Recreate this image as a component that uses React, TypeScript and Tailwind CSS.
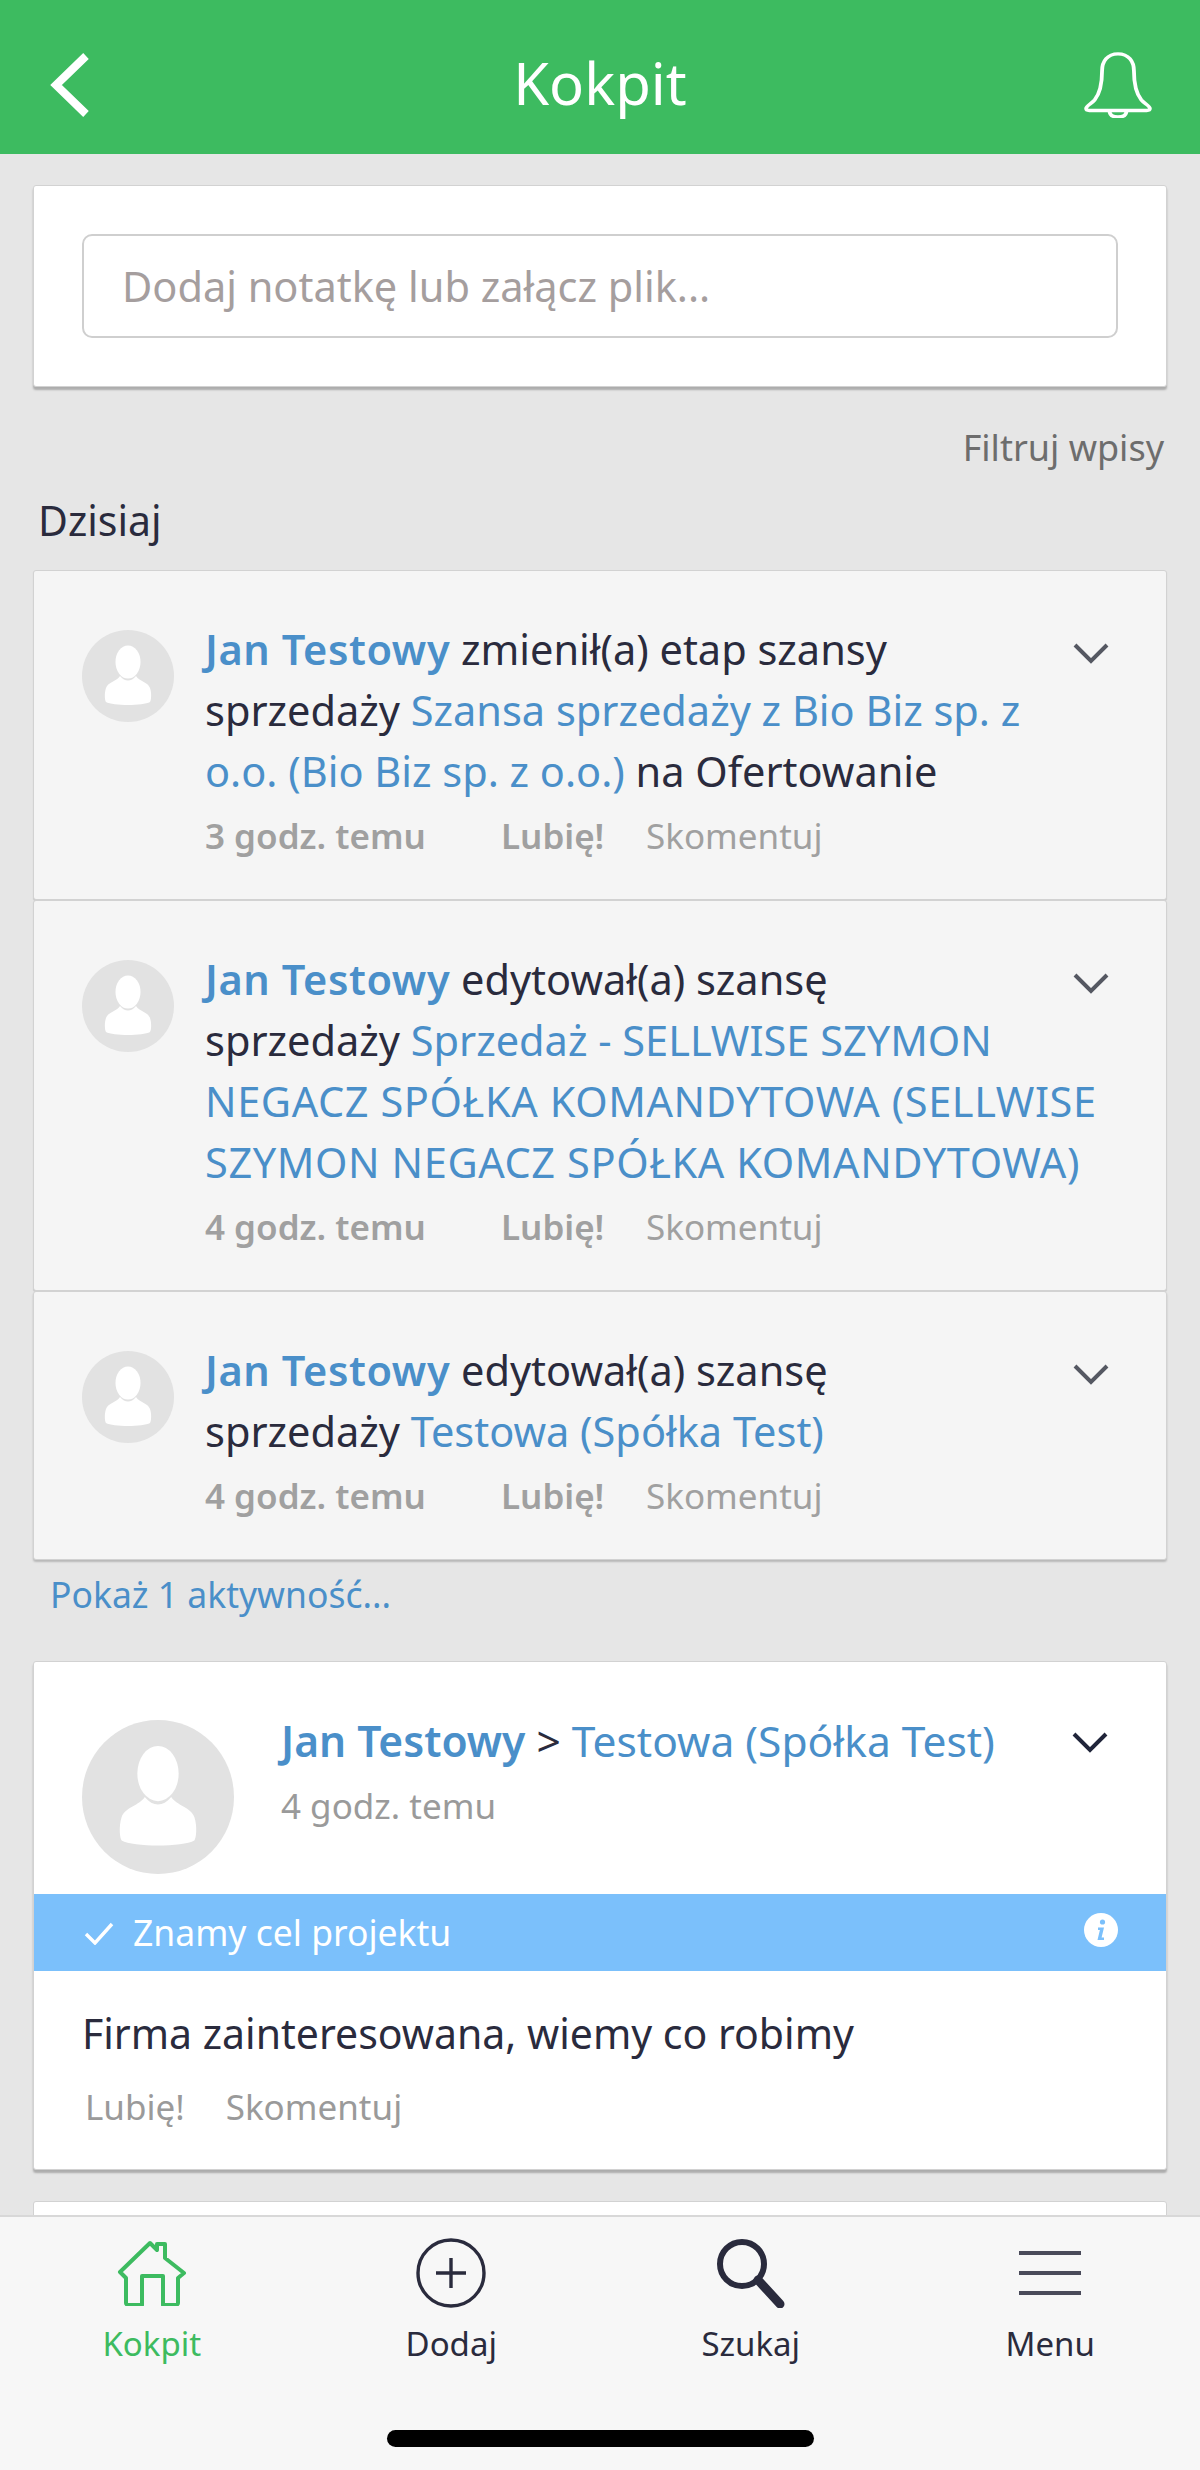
import React from "react";

const Avatar = ({ large }: { large?: boolean }) => (
  <svg viewBox="0 0 92 92" preserveAspectRatio="none" className={large ? "h-[154px] w-[152px] shrink-0" : "h-[92px] w-[92px] shrink-0"}>
    <circle cx="46" cy="46" r="46" fill="#e2e2e2" />
    <ellipse cx="46" cy="32" rx="12.500" ry="16.500" fill="#fff" />
    <path d="M38 46c-3 5-12 6-14 12-2 6-1 13 0 14 7 4 37 4 44 0 1-1 2-8 0-14-2-6-11-7-14-12-5 6-11 6-16 0z" fill="#fff" />
  </svg>
);

const Chevron = ({ dark }: { dark?: boolean }) => (
  <svg viewBox="0 0 36 22" className="h-[22px] w-[36px]" fill="none" stroke={dark ? "#20253a" : "#555862"} strokeWidth="4">
    <path d="M2 3l16 16L34 3" />
  </svg>
);

function Activity({
  action,
  time,
  children,
  last,
}: {
  action: string;
  time: string;
  children: React.ReactNode;
  last?: boolean;
}) {
  return (
    <div
      className={`rounded-[3px] border border-[#d2d2d2] bg-[#f5f5f5] pb-[37px] pl-[48px] pr-[57px] pt-[48px] ${
        last ? "shadow-[0_2px_2px_rgba(0,0,0,0.2)]" : "shadow-[0_1px_1px_rgba(0,0,0,0.15)]"
      }`}
    >
      <div className="flex items-start">
        <div className="pt-[11px]">
          <Avatar />
        </div>
        <div className="ml-[31px] min-w-0 flex-1 whitespace-nowrap">
          <p className="text-[41.5px] leading-[61px] text-[#2a2b3d]">
            <span className="font-semibold tracking-[0.6px] text-[#4a8fc9]">Jan Testowy</span> {action}
            <br />
            {children}
          </p>
          <div className="mt-[8px] flex h-[52px] items-center text-[35px] text-[#a0a0a0]">
            <span className="w-[296px] font-semibold">{time}</span>
            <span className="w-[145px] font-semibold">Lubię!</span>
            <span>Skomentuj</span>
          </div>
        </div>
        <div className="mt-[23px]">
          <Chevron />
        </div>
      </div>
    </div>
  );
}

const Link = ({ children, wide }: { children: React.ReactNode; wide?: boolean }) => (
  <span className={wide ? "tracking-[0.6px] text-[#4a8fc9]" : "text-[#4a8fc9]"}>{children}</span>
);

function NavItem({ label, icon, active }: { label: string; icon: React.ReactNode; active?: boolean }) {
  return (
    <div className={`flex flex-col items-center ${active ? "text-[#3dbb60]" : "text-[#2a2b3d]"}`}>
      <div className="flex h-[70px] items-center justify-center">{icon}</div>
      <span className="mt-[15px] text-[33px] leading-[42px]">{label}</span>
    </div>
  );
}

export default function App() {
  return (
    <div className="flex h-[2470px] w-[1200px] flex-col overflow-hidden bg-[#e6e6e6] font-['Noto_Sans',sans-serif]">
      <header className="flex h-[154px] shrink-0 items-center justify-between bg-[#3dbb60] px-[48px] text-white">
        <div className="mt-[16px] w-[68px]">
          <svg viewBox="0 0 42 66" className="h-[66px] w-[42px]" fill="none" stroke="#fff" strokeWidth="8">
            <path d="M38 4L8 33l30 29" />
          </svg>
        </div>
        <h1 className="mt-[12px] text-[58px] leading-none">Kokpit</h1>
        <svg viewBox="3 0 64 70" preserveAspectRatio="none" className="mt-[16px] h-[66px] w-[68px]" fill="none" stroke="#fff" strokeWidth="3.6">
          <path d="M35 2c-10 0-15 8-15 18 0 14-2 24-7 31-3 4-8 6-8 9 0 1 1 2 3 2h54c2 0 3-1 3-2 0-3-5-5-8-9-5-7-7-17-7-31 0-10-5-18-15-18z" />
          <path d="M27 62c0 5 3 7 8 7s8-2 8-7" />
        </svg>
      </header>

      <main className="min-h-0 flex-1 overflow-hidden px-[33px] pt-[31px]">
        <div className="rounded-[3px] border border-[#d2d2d2] bg-white px-[48px] py-[48px] shadow-[0_3px_2px_rgba(0,0,0,0.25)]">
          <div className="flex h-[104px] items-center rounded-[10px] border-2 border-[#cfcfcf] px-[38px] text-[41.5px] text-[#a59e9e]">
            Dodaj notatkę lub załącz plik...
          </div>
        </div>

        <div className="mr-[3px] mt-[39px] text-right text-[36px] leading-[44px] text-[#6d6d6d]">Filtruj wpisy</div>
        <div className="mb-[25px] ml-[5px] mt-[25px] text-[41px] leading-[50px] text-[#2a2b3d]">Dzisiaj</div>

        <Activity action="zmienił(a) etap szansy" time="3 godz. temu">
          sprzedaży <Link>Szansa sprzedaży z Bio Biz sp. z</Link>
          <br />
          <Link>o.o. (Bio Biz sp. z o.o.)</Link> na Ofertowanie
        </Activity>
        <Activity action="edytował(a) szansę" time="4 godz. temu">
          sprzedaży <Link>Sprzedaż - SELLWISE SZYMON</Link>
          <br />
          <Link wide>NEGACZ SPÓŁKA KOMANDYTOWA (SELLWISE</Link>
          <br />
          <Link wide>SZYMON NEGACZ SPÓŁKA KOMANDYTOWA)</Link>
        </Activity>
        <Activity action="edytował(a) szansę" time="4 godz. temu" last>
          sprzedaży <Link>Testowa (Spółka Test)</Link>
        </Activity>

        <div className="ml-[17px] mt-[12px] text-[35.500px] leading-[44px] text-[#4a8fc9]">Pokaż 1 aktywność...</div>

        <div className="mt-[45px] rounded-[3px] border border-[#d2d2d2] bg-white pt-[58px] shadow-[0_3px_2px_rgba(0,0,0,0.25)]">
          <div className="flex items-start pl-[48px] pr-[58px]">
            <Avatar large />
            <div className="ml-[47px] min-w-0 flex-1 whitespace-nowrap">
              <div className="-mt-[4px] text-[42.500px] leading-[50px] text-[#2a2b3d]">
                <span className="font-semibold text-[#4a8fc9]">Jan Testowy</span> &gt; <Link>Testowa (Spółka Test)</Link>
              </div>
              <div className="mt-[18px] text-[35px] leading-[44px] text-[#9a9a9a]">4 godz. temu</div>
            </div>
            <div className="mt-[11px]">
              <Chevron dark />
            </div>
          </div>
          <div className="mt-[20px] flex h-[77px] items-center justify-between bg-[#7bc0fb] pl-[50px] pr-[48px] text-white">
            <div className="flex items-center">
              <svg viewBox="0 0 30 24" className="h-[24px] w-[30px]" fill="none" stroke="#fff" strokeWidth="3.4">
                <path d="M2 13l9 9L28 3" />
              </svg>
              <span className="ml-[19px] text-[35.500px]">Znamy cel projektu</span>
            </div>
            <svg viewBox="0 0 34 34" className="mb-[5px] h-[34px] w-[34px]">
              <circle cx="17" cy="17" r="17" fill="#fff" />
              <circle cx="18.5" cy="9" r="2.6" fill="#7bc0fb" />
              <path d="M14 14.5h6l-2.4 10h2.4v2.5h-6.500l2.400-10H14z" fill="#7bc0fb" />
            </svg>
          </div>
          <div className="px-[48px] pt-[37px] text-[41px] leading-[50px] text-[#2a2b3d]">
            Firma zainteresowana, wiemy co robimy
          </div>
          <div className="mb-[40px] mt-[27px] flex h-[44px] items-center gap-[41px] pl-[51px] text-[35px] text-[#9a9a9a]">
            <span>Lubię!</span>
            <span>Skomentuj</span>
          </div>
        </div>

        <div className="mt-[31px] h-[40px] rounded-t-[3px] border border-[#d2d2d2] bg-white" />
      </main>

      <nav className="relative h-[255px] shrink-0 border-t-2 border-[#d8d8d8] bg-[#f7f7f7]">
        <div className="grid grid-cols-4 pl-[2px] pt-[21px]">
          <NavItem
            label="Kokpit"
            active
            icon={
              <svg viewBox="0 0 70 66" className="h-[66px] w-[70px]" fill="none" stroke="#3dbb60" strokeWidth="4" strokeLinejoin="round">
                <path d="M3 32L33 3l7 7V4h8v14l19 15-6 5v25c0 1-1 2-2 2H46V36H25v29H11c-1 0-2-1-2-2V38z" />
              </svg>
            }
          />
          <NavItem
            label="Dodaj"
            icon={
              <svg viewBox="0 0 70 70" className="h-[70px] w-[70px]" fill="none" stroke="#2a2b3d" strokeWidth="3.4">
                <circle cx="35" cy="35" r="33" />
                <path d="M35 20v30M20 35h30" />
              </svg>
            }
          />
          <NavItem
            label="Szukaj"
            icon={
              <svg viewBox="0 0 70 70" className="h-[70px] w-[70px]" fill="none" stroke="#2a2b3d">
                <circle cx="26" cy="26" r="22" strokeWidth="6" />
                <path d="M42 42l22 24" strokeWidth="9" strokeLinecap="round" />
              </svg>
            }
          />
          <NavItem
            label="Menu"
            icon={
              <svg viewBox="0 0 62 44" className="h-[44px] w-[62px]" fill="#4a4b5a">
                <rect y="0" width="62" height="4" />
                <rect y="20" width="62" height="4" />
                <rect y="40" width="62" height="4" />
              </svg>
            }
          />
        </div>
        <div className="absolute bottom-[23px] left-[387px] h-[17px] w-[427px] rounded-full bg-black" />
      </nav>
    </div>
  );
}
